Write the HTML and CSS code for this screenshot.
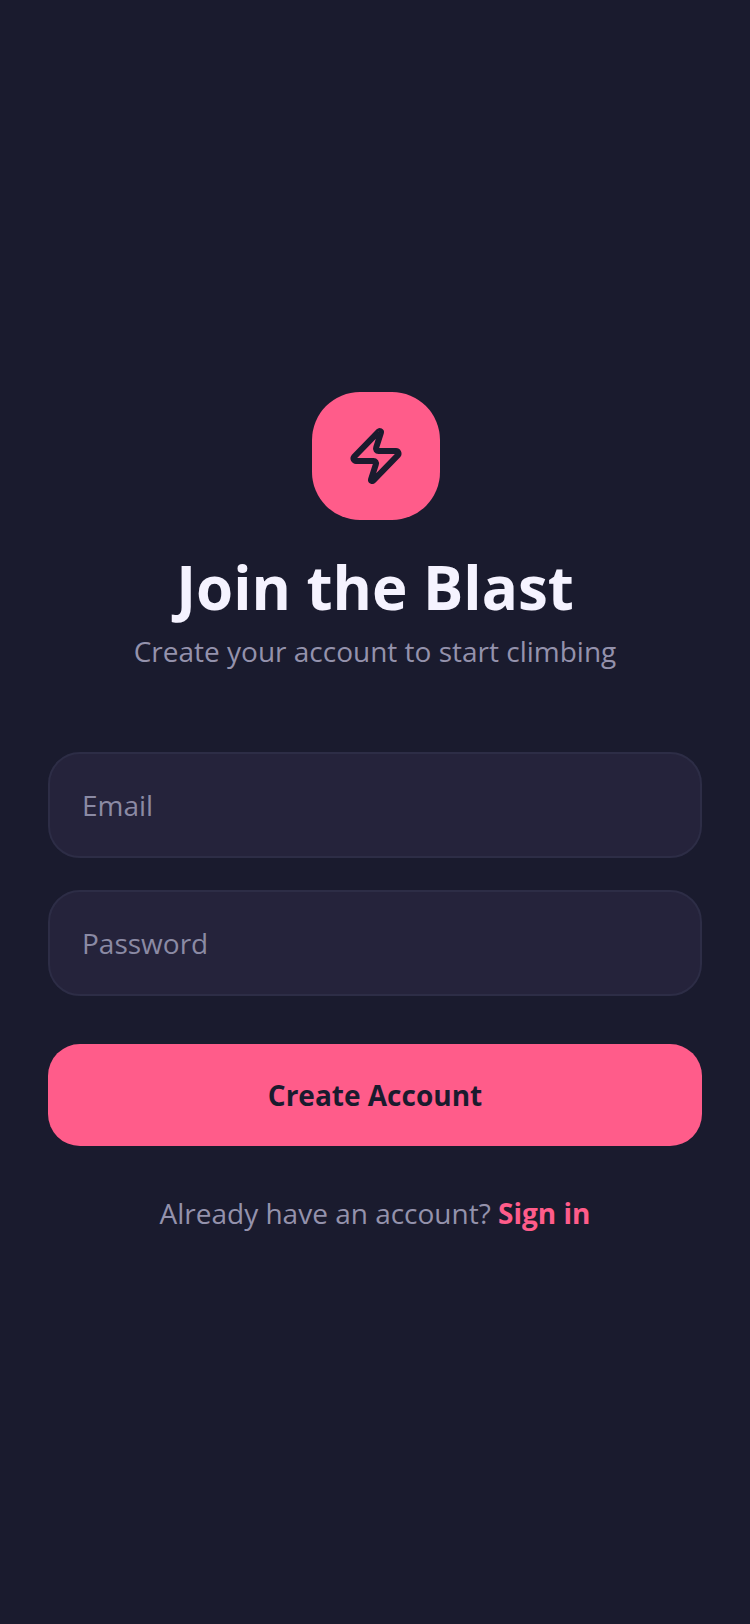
FILE: index.html
```html
<!DOCTYPE html>
<html lang="en">
<head>
  <meta charset="UTF-8" />
  <title>Join the Blast</title>
  <link rel="stylesheet" href="styles.css">
</head>
<body>
  <main class="screen">
    <div class="logo">
      <svg class="logo-icon" viewBox="0 0 24 24" fill="none" stroke="currentColor" stroke-width="2.4" stroke-linecap="round" stroke-linejoin="round">
        <path d="M4 14a1 1 0 0 1-.78-1.63l9.9-10.2a.5.5 0 0 1 .86.46l-1.92 6.02A1 1 0 0 0 13 10h7a1 1 0 0 1 .78 1.63l-9.9 10.2a.5.5 0 0 1-.86-.46l1.92-6.02A1 1 0 0 0 11 14z"/>
      </svg>
    </div>
    <h1 class="title">Join the Blast</h1>
    <p class="subtitle">Create your account to start climbing</p>

    <form class="form">
      <input class="field" type="email" placeholder="Email" />
      <input class="field" type="password" placeholder="Password" />
      <button class="submit" type="button">Create Account</button>
    </form>

    <p class="signin">Already have an account? <a class="signin-link" href="#">Sign in</a></p>
  </main>
</body>
</html>
```

FILE: styles.css
```css
html, body {
  margin: 0;
  padding: 0;
  background-color: #1a1b2e;
  font-family: "Open Sans", sans-serif;
}

.screen {
  box-sizing: border-box;
  height: 1624px;
  padding: 392px 48px 0;
  display: flex;
  flex-direction: column;
  align-items: center;
}

/* Logo tile */
.logo {
  width: 128px;
  height: 128px;
  margin-left: 2px;
  border-radius: 48px;
  background-color: #ff5c8a;
  color: #1a1b2e;
  display: flex;
  align-items: center;
  justify-content: center;
}
.logo-icon {
  width: 60px;
  height: 60px;
}

/* Heading */
.title {
  margin: 23px 0 0;
  font-size: 60px;
  line-height: 88px;
  font-weight: 700;
  color: #f5f3ff;
}
.subtitle {
  margin: 0;
  font-size: 28px;
  line-height: 40px;
  color: #9492ac;
}

/* Form */
.form {
  width: 100%;
  margin-top: 81px;
  display: flex;
  flex-direction: column;
}
.field {
  box-sizing: border-box;
  width: 100%;
  height: 106px;
  margin-bottom: 32px;
  padding: 0 32px;
  background-color: #25233b;
  border: 2px solid #2d2d46;
  border-radius: 32px;
  font-family: inherit;
  font-size: 28px;
  color: #f5f3ff;
  outline: none;
}
.field::placeholder {
  color: #8b8aa4;
  opacity: 1;
}
.submit {
  height: 102px;
  margin-top: 16px;
  background-color: #ff5c8a;
  border: none;
  border-radius: 32px;
  font-family: inherit;
  font-size: 28px;
  font-weight: 700;
  color: #1a1b2e;
}

/* Footer link */
.signin {
  margin: 47px 0 0;
  font-size: 28px;
  line-height: 40px;
  color: #9492ac;
}
.signin-link {
  font-weight: 700;
  color: #ff5c8a;
  text-decoration: none;
}
```
